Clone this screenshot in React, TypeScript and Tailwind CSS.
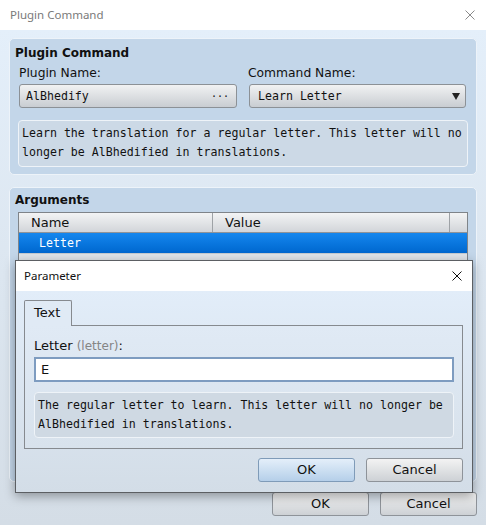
import React from "react";

function CloseIcon({ color, size }: { color: string; size: number }) {
  return (
    <svg width={size} height={size} viewBox="0 0 10 10">
      <path d="M0.5 0.5 L9.5 9.5 M9.5 0.5 L0.5 9.5" stroke={color} strokeWidth="1" fill="none" />
    </svg>
  );
}

function Button({ label, primary }: { label: string; primary?: boolean }) {
  return (
    <div
      className={
        "w-[97px] h-[24px] flex items-center justify-center rounded-[3px] border text-[13px] text-[#111] " +
        (primary
          ? "border-[#7f9bb8] bg-gradient-to-b from-[#e4effa] to-[#b5cfe9]"
          : "border-[#8e9399] bg-gradient-to-b from-[#f3f3f3] to-[#cdd1d5]")
      }
    >
      {label}
    </div>
  );
}

export default function App() {
  return (
    <div className="relative w-[486px] h-[525px] overflow-hidden bg-white font-['DejaVu_Sans',sans-serif] text-[#111]">
      {/* title bar */}
      <div className="h-[30px] flex items-center justify-between pl-[10px] pr-[11px] bg-white">
        <span className="font-['Noto_Sans',sans-serif] text-[11.5px] text-[#7a7a7a]">Plugin Command</span>
        <CloseIcon color="#8a8a8a" size={10} />
      </div>

      <div className="h-[495px] bg-gradient-to-b from-[#e4effa] to-[#d4dde6] pl-[9px] pt-[8px]">
        {/* Plugin Command group */}
        <div className="w-[468px] h-[137px] rounded-[5px] border border-[#edf3f9] bg-[#c3d6e9] px-[8px] pt-[5px]">
          <div className="h-[18px] leading-[18px] text-[12px] font-bold -ml-[3px]">Plugin Command</div>
          <div className="mt-[3px] grid grid-cols-[218px_217px] gap-x-[12px] pl-[1px]">
            <div className="h-[16px] leading-[16px] text-[12.3px]">Plugin Name:</div>
            <div className="h-[16px] leading-[16px] text-[12.3px] -ml-[1px]">Command Name:</div>
            <div className="mt-[3px] h-[24px] flex items-center justify-between rounded-[3px] border border-[#8c9196] bg-gradient-to-b from-[#f1f2f3] to-[#c9cdd2] pl-[6px] pr-[7px] pt-[1px] font-['DejaVu_Sans_Mono',monospace] text-[11.6px]">
              <span>AlBhedify</span>
              <span className="text-[10px]">···</span>
            </div>
            <div className="mt-[3px] h-[24px] flex items-center justify-between rounded-[3px] border border-[#8c9196] bg-gradient-to-b from-[#f1f2f3] to-[#c9cdd2] pl-[8px] pr-[5px] pt-[1px] font-['DejaVu_Sans_Mono',monospace] text-[11.6px]">
              <span>Learn Letter</span>
              <svg width="8" height="7" viewBox="0 0 8 7">
                <path d="M0 0 H8 L4 7 Z" fill="#222" />
              </svg>
            </div>
          </div>
          <div className="mt-[12px] h-[47px] rounded-[4px] border border-[#eef3f8] bg-[#ccd9e6] pl-[3px] pt-[3px] font-['DejaVu_Sans_Mono',monospace] text-[11.6px] leading-[19px]">
            Learn the translation for a regular letter. This letter will no
            <br />
            longer be AlBhedified in translations.
          </div>
        </div>

        {/* Arguments group */}
        <div className="mt-[12px] w-[468px] h-[295px] rounded-[5px] border border-[#edf3f9] bg-[#c3d6e9] px-[8px] pt-[3px]">
          <div className="h-[18px] leading-[18px] text-[12px] font-bold -ml-[3px]">Arguments</div>
          <div className="mt-[3px] h-[260px] border border-[#7f8489] bg-[#f4f6f8]">
            <div className="h-[20px] flex border-b border-[#8e9399] bg-gradient-to-b from-[#f3f4f5] to-[#d2d5d9] text-[13px]">
              <div className="w-[194px] pl-[12px] leading-[19px] border-r border-[#9ea2a6]">Name</div>
              <div className="w-[237px] pl-[12px] leading-[19px] border-r border-[#9ea2a6]">Value</div>
              <div className="flex-1" />
            </div>
            <div className="h-[20px] flex items-center pl-[20px] pt-[1px] bg-gradient-to-b from-[#1587ee] to-[#0067cf] text-white font-['DejaVu_Sans_Mono',monospace] text-[11.6px]">
              Letter
            </div>
            <div className="h-[20px] border-t border-[#c4cad0] bg-[#dfe4e9]" />
          </div>
        </div>

        {/* bottom buttons */}
        <div className="mt-[10px] w-[468px] flex justify-end gap-[11px]">
          <Button label="OK" />
          <Button label="Cancel" />
        </div>
      </div>

      {/* Parameter dialog */}
      <div className="absolute left-[15px] top-[260px] w-[458px] h-[233px] border border-[#5c5f63] shadow-[0_3px_10px_rgba(0,0,0,0.35)] flex flex-col">
        <div className="h-[30px] shrink-0 flex items-center justify-between bg-white pl-[8px] pr-[10px]">
          <span className="font-['Noto_Sans',sans-serif] text-[11.5px] text-[#111]">Parameter</span>
          <CloseIcon color="#111" size={10} />
        </div>
        <div className="flex-1 bg-gradient-to-b from-[#e2edf9] to-[#d3dde7] pl-[8px] pr-[9px] pt-[9px]">
          <div className="relative z-10 w-[48px] h-[26px] -mb-px rounded-t-[2px] border border-b-0 border-[#868a8f] bg-[#e0eaf5] pl-[9px] leading-[24px] text-[13px]">
            Text
          </div>
          <div className="h-[124px] border border-[#868a8f] bg-gradient-to-b from-[#e0eaf5] to-[#d8e2ec] pl-[9px] pr-[8px] pt-[11px]">
            <div className="h-[18px] leading-[18px] text-[13px]">
              Letter <span className="text-[12px] text-[#858585]">(letter)</span>:
            </div>
            <div className="mt-[2px] h-[25px] flex items-center border-2 border-[#7e9cc0] bg-white pl-[5px] text-[13px]">
              E
            </div>
            <div className="mt-[10px] h-[46px] rounded-[4px] border border-[#eef3f8] bg-[#cfd9e3] pl-[3px] pt-[3px] font-['DejaVu_Sans_Mono',monospace] text-[11.6px] leading-[19px]">
              The regular letter to learn. This letter will no longer be
              <br />
              AlBhedified in translations.
            </div>
          </div>
          <div className="mt-[9px] flex justify-end gap-[11px]">
            <Button label="OK" primary />
            <Button label="Cancel" />
          </div>
        </div>
      </div>
    </div>
  );
}
